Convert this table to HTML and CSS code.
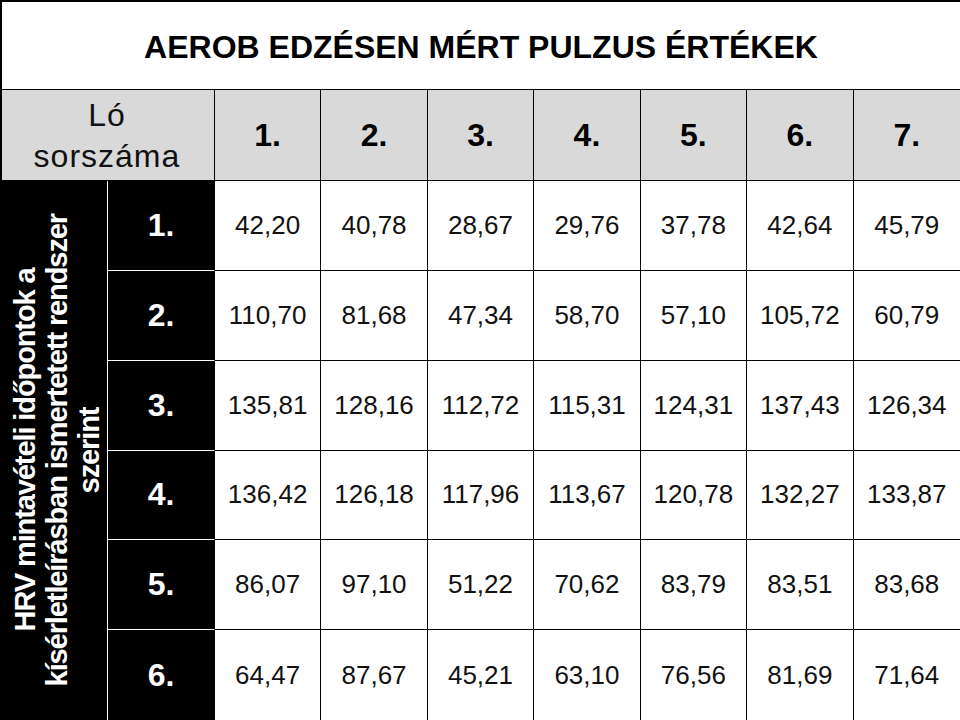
FILE: index.html
```html
<!DOCTYPE html>
<html lang="hu">
<head>
<meta charset="utf-8">
<title>Aerob edzésen mért pulzus értékek</title>
<link rel="stylesheet" href="styles.css">
</head>
<body>
<div class="sheet">
  <div class="title">AEROB EDZÉSEN MÉRT PULZUS ÉRTÉKEK</div>

  <div class="corner">Ló<br>sorszáma</div>
  <div class="hnum">1.</div>
  <div class="hnum">2.</div>
  <div class="hnum">3.</div>
  <div class="hnum">4.</div>
  <div class="hnum">5.</div>
  <div class="hnum">6.</div>
  <div class="hnum last">7.</div>

  <div class="side"><span class="side-text">HRV mintavételi időpontok a<br>kísérletleírásban ismertetett rendszer<br>szerint</span></div>

  <div class="rnum">1.</div>
  <div class="cell">42,20</div><div class="cell">40,78</div><div class="cell">28,67</div><div class="cell">29,76</div><div class="cell">37,78</div><div class="cell">42,64</div><div class="cell last">45,79</div>

  <div class="rnum">2.</div>
  <div class="cell">110,70</div><div class="cell">81,68</div><div class="cell">47,34</div><div class="cell">58,70</div><div class="cell">57,10</div><div class="cell">105,72</div><div class="cell last">60,79</div>

  <div class="rnum">3.</div>
  <div class="cell">135,81</div><div class="cell">128,16</div><div class="cell">112,72</div><div class="cell">115,31</div><div class="cell">124,31</div><div class="cell">137,43</div><div class="cell last">126,34</div>

  <div class="rnum">4.</div>
  <div class="cell">136,42</div><div class="cell">126,18</div><div class="cell">117,96</div><div class="cell">113,67</div><div class="cell">120,78</div><div class="cell">132,27</div><div class="cell last">133,87</div>

  <div class="rnum">5.</div>
  <div class="cell">86,07</div><div class="cell">97,10</div><div class="cell">51,22</div><div class="cell">70,62</div><div class="cell">83,79</div><div class="cell">83,51</div><div class="cell last">83,68</div>

  <div class="rnum bottom">6.</div>
  <div class="cell bottom">64,47</div><div class="cell bottom">87,67</div><div class="cell bottom">45,21</div><div class="cell bottom">63,10</div><div class="cell bottom">76,56</div><div class="cell bottom">81,69</div><div class="cell bottom last">71,64</div>
</div>
</body>
</html>
```

FILE: styles.css
```css
html, body {
  margin: 0;
  padding: 0;
  background: #ffffff;
}

body {
  font-family: "Liberation Sans", Arial, sans-serif;
  color: #000;
}

.sheet {
  width: 960px;
  height: 720px;
  box-sizing: border-box;
  border-top: 2px solid #000;
  border-left: 2px solid #000;
  display: grid;
  grid-template-columns: repeat(9, 1fr);
  grid-template-rows: 88px 91px repeat(6, 1fr);
  overflow: hidden;
}

.sheet > div {
  box-sizing: border-box;
  display: flex;
  align-items: center;
  justify-content: center;
  text-align: center;
}

.title {
  grid-column: 1 / -1;
  border-bottom: 1px solid #000;
  font-size: 32px;
  font-weight: bold;
  padding-top: 4px;
}

.corner {
  grid-column: 1 / 3;
  background: #d9d9d9;
  border-right: 1px solid #000;
  border-bottom: 1px solid #000;
  font-size: 32px;
  line-height: 41px;
  letter-spacing: 1px;
  padding-top: 1px;
  margin-left: -2px;
  color: #111;
}

.hnum {
  background: #d9d9d9;
  border-right: 1px solid #000;
  border-bottom: 1px solid #000;
  font-size: 32px;
  font-weight: bold;
}

.hnum.last,
.cell.last {
  border-right: none;
}

.side {
  grid-column: 1;
  grid-row: 3 / 9;
  background: #000;
  border-right: 1px solid #fff;
  margin-left: -2px;
  padding-left: 6px;
}

.side-text {
  writing-mode: vertical-rl;
  transform: rotate(180deg);
  color: #fff;
  font-size: 29px;
  font-weight: bold;
  line-height: 32px;
  letter-spacing: -1.1px;
  text-align: center;
  white-space: nowrap;
}

.rnum {
  grid-column: 2;
  background: #000;
  color: #fff;
  border-bottom: 1px solid #fff;
  border-right: 1px solid #000;
  font-size: 32px;
  font-weight: bold;
}

.cell {
  border-right: 1px solid #000;
  border-bottom: 1px solid #000;
  font-size: 26px;
  color: #111;
}

.bottom {
  border-bottom: none;
}
```
